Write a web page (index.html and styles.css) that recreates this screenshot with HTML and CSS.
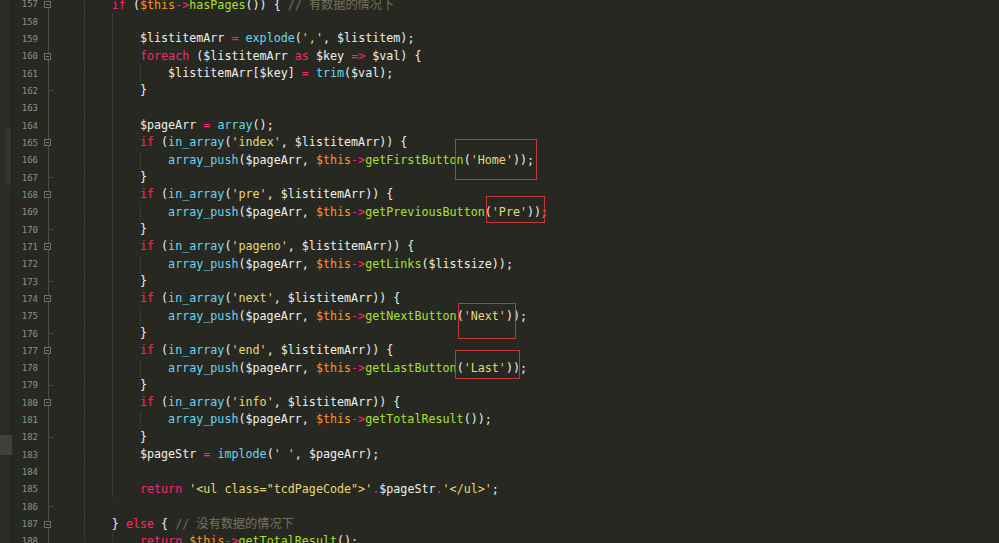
FILE: index.html
```html
<!DOCTYPE html>
<html lang="zh-CN">
<head>
    <meta charset="UTF-8">
    <meta name="viewport" content="width=device-width, initial-scale=1.0">
    <title>Page.php</title>
    <link rel="stylesheet" href="styles.css">
</head>
<body>
<div class="page">
    <div class="editor">
        <div class="side"></div>
        <div class="gutter">
            <div class="grow"><span class="num">157</span><span class="fold"><i class="box"></i></span></div>
            <div class="grow"><span class="num">158</span><span class="fold"></span></div>
            <div class="grow"><span class="num">159</span><span class="fold"></span></div>
            <div class="grow"><span class="num">160</span><span class="fold"><i class="box"></i></span></div>
            <div class="grow"><span class="num">161</span><span class="fold"></span></div>
            <div class="grow"><span class="num">162</span><span class="fold"><i class="tick"></i></span></div>
            <div class="grow"><span class="num">163</span><span class="fold"></span></div>
            <div class="grow"><span class="num">164</span><span class="fold"></span></div>
            <div class="grow"><span class="num">165</span><span class="fold"><i class="box"></i></span></div>
            <div class="grow"><span class="num">166</span><span class="fold"></span></div>
            <div class="grow"><span class="num">167</span><span class="fold"><i class="tick"></i></span></div>
            <div class="grow"><span class="num">168</span><span class="fold"><i class="box"></i></span></div>
            <div class="grow"><span class="num">169</span><span class="fold"></span></div>
            <div class="grow"><span class="num">170</span><span class="fold"><i class="tick"></i></span></div>
            <div class="grow"><span class="num">171</span><span class="fold"><i class="box"></i></span></div>
            <div class="grow"><span class="num">172</span><span class="fold"></span></div>
            <div class="grow"><span class="num">173</span><span class="fold"><i class="tick"></i></span></div>
            <div class="grow"><span class="num">174</span><span class="fold"><i class="box"></i></span></div>
            <div class="grow"><span class="num">175</span><span class="fold"></span></div>
            <div class="grow"><span class="num">176</span><span class="fold"><i class="tick"></i></span></div>
            <div class="grow"><span class="num">177</span><span class="fold"><i class="box"></i></span></div>
            <div class="grow"><span class="num">178</span><span class="fold"></span></div>
            <div class="grow"><span class="num">179</span><span class="fold"><i class="tick"></i></span></div>
            <div class="grow"><span class="num">180</span><span class="fold"><i class="box"></i></span></div>
            <div class="grow"><span class="num">181</span><span class="fold"></span></div>
            <div class="grow"><span class="num">182</span><span class="fold"><i class="tick"></i></span></div>
            <div class="grow"><span class="num">183</span><span class="fold"></span></div>
            <div class="grow"><span class="num">184</span><span class="fold"></span></div>
            <div class="grow"><span class="num">185</span><span class="fold"></span></div>
            <div class="grow"><span class="num">186</span><span class="fold"><i class="tick"></i></span></div>
            <div class="grow"><span class="num">187</span><span class="fold"><i class="box"></i></span></div>
            <div class="grow"><span class="num">188</span><span class="fold"></span></div>
        </div>
        <div class="code">
<div class="ln g1">        <span class="k">if</span> (<span class="t">$this</span><span class="o">-&gt;</span><span class="m">hasPages</span>()) { <span class="c">// <span class="cjk">有数据的情况下</span></span></div>
<div class="ln g2"></div>
<div class="ln g2">            $listitemArr <span class="o">=</span> <span class="f">explode</span>(<span class="s">','</span>, $listitem);</div>
<div class="ln g2">            <span class="k">foreach</span> ($listitemArr <span class="k">as</span> $key <span class="o">=&gt;</span> $val) {</div>
<div class="ln g3">                $listitemArr[$key] <span class="o">=</span> <span class="f">trim</span>($val);</div>
<div class="ln g2">            }</div>
<div class="ln g2"></div>
<div class="ln g2">            $pageArr <span class="o">=</span> <span class="f">array</span>();</div>
<div class="ln g2">            <span class="k">if</span> (<span class="f">in_array</span>(<span class="s">'index'</span>, $listitemArr)) {</div>
<div class="ln g3">                <span class="f">array_push</span>($pageArr, <span class="t">$this</span><span class="o">-&gt;</span><span class="m">getFirstButton</span>(<span class="s">'Home'</span>));</div>
<div class="ln g2">            }</div>
<div class="ln g2">            <span class="k">if</span> (<span class="f">in_array</span>(<span class="s">'pre'</span>, $listitemArr)) {</div>
<div class="ln g3">                <span class="f">array_push</span>($pageArr, <span class="t">$this</span><span class="o">-&gt;</span><span class="m">getPreviousButton</span>(<span class="s">'Pre'</span>));</div>
<div class="ln g2">            }</div>
<div class="ln g2">            <span class="k">if</span> (<span class="f">in_array</span>(<span class="s">'pageno'</span>, $listitemArr)) {</div>
<div class="ln g3">                <span class="f">array_push</span>($pageArr, <span class="t">$this</span><span class="o">-&gt;</span><span class="m">getLinks</span>($listsize));</div>
<div class="ln g2">            }</div>
<div class="ln g2">            <span class="k">if</span> (<span class="f">in_array</span>(<span class="s">'next'</span>, $listitemArr)) {</div>
<div class="ln g3">                <span class="f">array_push</span>($pageArr, <span class="t">$this</span><span class="o">-&gt;</span><span class="m">getNextButton</span>(<span class="s">'Next'</span>));</div>
<div class="ln g2">            }</div>
<div class="ln g2">            <span class="k">if</span> (<span class="f">in_array</span>(<span class="s">'end'</span>, $listitemArr)) {</div>
<div class="ln g3">                <span class="f">array_push</span>($pageArr, <span class="t">$this</span><span class="o">-&gt;</span><span class="m">getLastButton</span>(<span class="s">'Last'</span>));</div>
<div class="ln g2">            }</div>
<div class="ln g2">            <span class="k">if</span> (<span class="f">in_array</span>(<span class="s">'info'</span>, $listitemArr)) {</div>
<div class="ln g3">                <span class="f">array_push</span>($pageArr, <span class="t">$this</span><span class="o">-&gt;</span><span class="m">getTotalResult</span>());</div>
<div class="ln g2">            }</div>
<div class="ln g2">            $pageStr <span class="o">=</span> <span class="f">implode</span>(<span class="s">' '</span>, $pageArr);</div>
<div class="ln g2"></div>
<div class="ln g2">            <span class="k">return</span> <span class="s">'&lt;ul class="tcdPageCode"&gt;'</span><span class="o">.</span>$pageStr<span class="o">.</span><span class="s">'&lt;/ul&gt;'</span>;</div>
<div class="ln g1"></div>
<div class="ln g1">        } <span class="k">else</span> { <span class="c">// <span class="cjk">没有数据的情况下</span></span></div>
<div class="ln g2">            <span class="k">return</span> <span class="t">$this</span><span class="o">-&gt;</span><span class="m">getTotalResult</span>();</div>
        </div>
    </div>

    <!-- scrollbar marks on the left strip -->
    <div class="thumb thumb-top"></div>
    <div class="thumb thumb-low"></div>

    <!-- red annotation boxes -->
    <div class="mark mark-home"></div>
    <div class="mark mark-pre"></div>
    <div class="mark mark-next"></div>
    <div class="mark mark-last"></div>
</div>
</body>
</html>
```

FILE: styles.css
```css
:root {
    --dot: repeating-linear-gradient(to bottom, #4a4b43 0 1px, transparent 1px 2px);
}
body {
    margin: 0;
    background-color: #272822;
    overflow: hidden;
}
.page {
    position: relative;
    width: 999px;
    height: 543px;
    overflow: hidden;
}
.editor {
    display: flex;
    margin-top: -4.4px;
}
.side {
    width: 11px;
    background-color: #2a2b25;
    border-right: 1px solid #1f201b;
}
.gutter {
    width: 43.5px;
}
.grow {
    display: flex;
    align-items: center;
    height: 17.33px;
}
.num {
    width: 26px;
    text-align: right;
    font-family: "DejaVu Sans Mono", monospace;
    font-size: 9px;
    color: #8f908a;
}
.fold {
    display: flex;
    align-items: center;
    width: 17.5px;
    height: 100%;
    background: linear-gradient(#4c4d46, #4c4d46) 9.5px 0 / 1px 100% no-repeat;
}
.box {
    display: block;
    width: 5px;
    height: 5px;
    margin-left: 6.3px;
    border: 1px solid #6f706a;
    background: linear-gradient(#7a7b74, #7a7b74) center / 3px 1px no-repeat, #272822;
}
.tick {
    display: block;
    width: 5px;
    height: 1px;
    margin-left: 10px;
    background-color: #4c4d46;
}
.code {
    flex: 1;
    font-family: "DejaVu Sans Mono", "Noto Sans CJK SC", monospace;
    font-size: 11.7px;
    color: #f0f0ea;
}
.ln {
    height: 17.33px;
    line-height: 17.33px;
    white-space: pre;
}
.cjk {
    font-family: "Noto Sans CJK SC", sans-serif;
    font-size: 12.2px;
}
.g1 {
    background: var(--dot) 28px 0 / 1px 100% no-repeat;
}
.g2 {
    background: var(--dot) 28px 0 / 1px 100% no-repeat,
                var(--dot) 56px 0 / 1px 100% no-repeat;
}
.g3 {
    background: var(--dot) 28px 0 / 1px 100% no-repeat,
                var(--dot) 56px 0 / 1px 100% no-repeat,
                var(--dot) 84px 0 / 1px 100% no-repeat;
}
.k, .o { color: #f92672; }
.f { color: #66d9ef; }
.t { color: #fd971f; }
.m { color: #a6e22e; }
.s { color: #e6db74; }
.c { color: #75715e; }

.thumb {
    position: absolute;
}
.thumb-top {
    left: 5px;
    top: 128px;
    width: 6px;
    height: 57px;
    background-color: #34352e;
}
.thumb-low {
    left: 0;
    top: 435px;
    width: 12px;
    height: 20px;
    background-color: #3f403a;
}
.mark {
    position: absolute;
    box-sizing: border-box;
    border: 1px solid #c63838;
}
.mark-home {
    left: 455px;
    top: 139px;
    width: 82px;
    height: 41px;
}
.mark-pre {
    left: 486px;
    top: 196px;
    width: 59px;
    height: 27px;
}
.mark-next {
    left: 458px;
    top: 303px;
    width: 58px;
    height: 36px;
}
.mark-last {
    left: 455px;
    top: 350px;
    width: 65px;
    height: 29px;
}
```
